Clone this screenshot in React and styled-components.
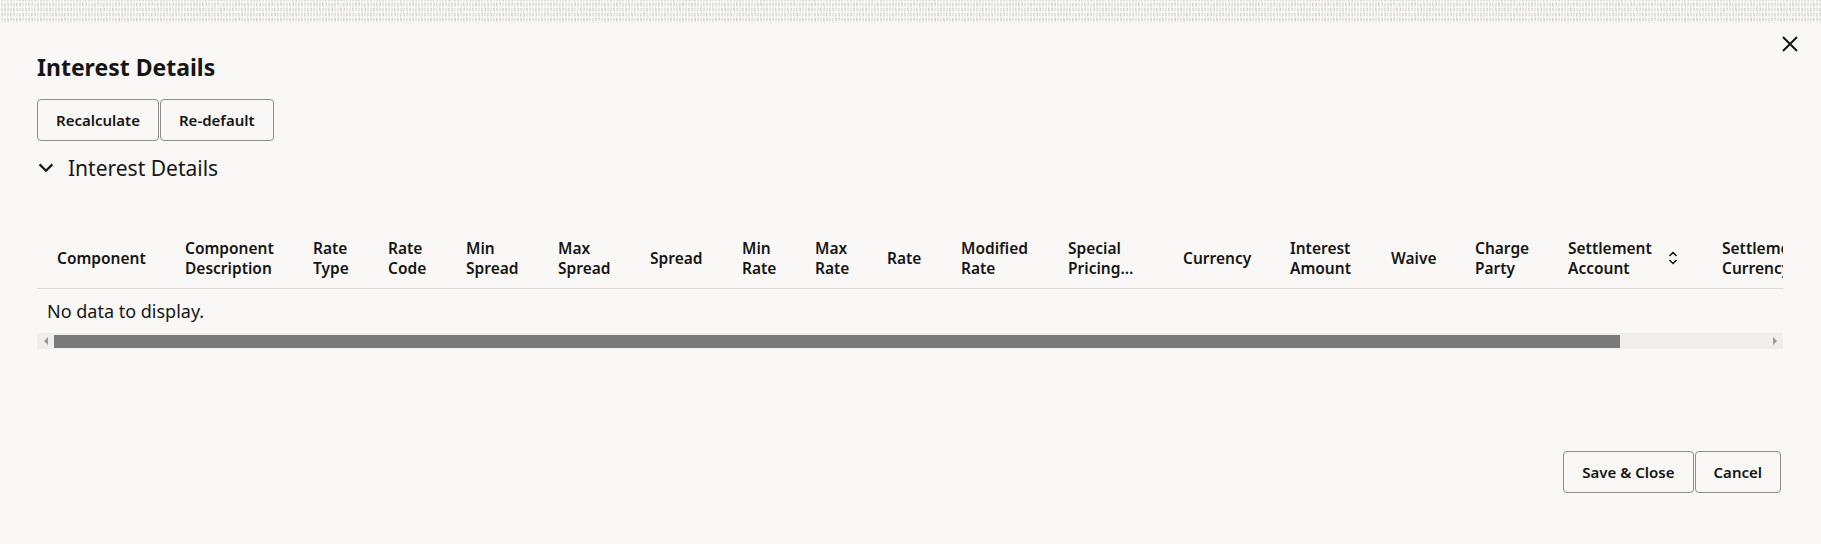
import React from 'react';
import styled, { createGlobalStyle } from 'styled-components';

const GlobalStyle = createGlobalStyle`
  html, body {
    margin: 0;
    padding: 0;
    background: #f9f8f6;
  }
  body {
    font-family: "Noto Sans", "Open Sans", sans-serif;
    color: #161513;
  }
`;

const columns = [
  { lines: ['Component'], width: 128 },
  { lines: ['Component', 'Description'], width: 128 },
  { lines: ['Rate', 'Type'], width: 75 },
  { lines: ['Rate', 'Code'], width: 78 },
  { lines: ['Min', 'Spread'], width: 92 },
  { lines: ['Max', 'Spread'], width: 92 },
  { lines: ['Spread'], width: 92 },
  { lines: ['Min', 'Rate'], width: 73 },
  { lines: ['Max', 'Rate'], width: 72 },
  { lines: ['Rate'], width: 74 },
  { lines: ['Modified', 'Rate'], width: 107 },
  { lines: ['Special', 'Pricing…'], width: 115 },
  { lines: ['Currency'], width: 107 },
  { lines: ['Interest', 'Amount'], width: 101 },
  { lines: ['Waive'], width: 84 },
  { lines: ['Charge', 'Party'], width: 93 },
  { lines: ['Settlement', 'Account'], width: 154, sortable: true },
  { lines: ['Settlement', 'Currency'], width: 140 },
  { lines: ['Charge', 'Amount'], width: 120 },
];

const tableWidth = columns.reduce((sum, c) => sum + c.width, 0);

const App = () => {
  return (
    <>
      <GlobalStyle />
      <Backdrop />
      <Dialog>
        <CloseButton aria-label="Close">
          <svg width="16" height="16" viewBox="0 0 16 16">
            <path d="M1 1 L15 15 M15 1 L1 15" stroke="#161513" strokeWidth="2" fill="none" />
          </svg>
        </CloseButton>

        <Title>Interest Details</Title>

        <Toolbar>
          <Button>Recalculate</Button>
          <Button>Re-default</Button>
        </Toolbar>

        <SectionToggle>
          <svg width="18" height="18" viewBox="0 0 18 18">
            <path d="M2.6 5.4 L9 11.8 L15.4 5.4" stroke="#161513" strokeWidth="2.2" fill="none" />
          </svg>
          <SectionTitle>Interest Details</SectionTitle>
        </SectionToggle>

        <TableFrame>
          <Table $width={tableWidth}>
            <colgroup>
              {columns.map((c, i) => (
                <Col key={i} $w={c.width} />
              ))}
            </colgroup>
            <thead>
              <tr>
                {columns.map((c, i) => (
                  <Th key={i}>
                    <HeadInner>
                      <span>
                        {c.lines.map((l, j) => (
                          <HeadLine key={j}>{l}</HeadLine>
                        ))}
                      </span>
                      {c.sortable && (
                        <SortIcon width="10" height="14" viewBox="0 0 10 14">
                          <path d="M1.5 5 L5 1.5 L8.5 5 M1.5 9 L5 12.5 L8.5 9" stroke="#161513" strokeWidth="1.5" fill="none" />
                        </SortIcon>
                      )}
                    </HeadInner>
                  </Th>
                ))}
              </tr>
            </thead>
            <tbody>
              <tr>
                <EmptyCell colSpan={columns.length}>No data to display.</EmptyCell>
              </tr>
            </tbody>
          </Table>
        </TableFrame>

        <Scrollbar>
          <ScrollArrow>
            <svg width="6" height="8" viewBox="0 0 6 8">
              <path d="M5 0 L1 4 L5 8 Z" fill="#9a9896" />
            </svg>
          </ScrollArrow>
          <ScrollTrack>
            <Thumb style={{ width: '91.5%' }} />
          </ScrollTrack>
          <ScrollArrow>
            <svg width="6" height="8" viewBox="0 0 6 8">
              <path d="M1 0 L5 4 L1 8 Z" fill="#9a9896" />
            </svg>
          </ScrollArrow>
        </Scrollbar>

        <Footer>
          <Button>Save &amp; Close</Button>
          <Button>Cancel</Button>
        </Footer>
      </Dialog>
    </>
  );
};

const Backdrop = styled.div`
  height: 23px;
  background-color: #e6e4e1;
  background-image:
    repeating-linear-gradient(90deg, rgba(255, 255, 255, 0.75) 0 1px, transparent 1px 3px),
    repeating-linear-gradient(0deg, rgba(255, 255, 255, 0.5) 0 2px, transparent 2px 5px),
    repeating-linear-gradient(75deg, rgba(205, 203, 200, 0.55) 0 1px, transparent 1px 4px);
`;

const Dialog = styled.div`
  position: relative;
  display: flex;
  flex-direction: column;
  padding: 30px 38px 0 37px;
  height: 521px;
  box-sizing: border-box;
  background: #f9f8f6;
`;

const CloseButton = styled.button`
  position: absolute;
  top: 13px;
  right: 23px;
  width: 16px;
  height: 16px;
  padding: 0;
  border: none;
  background: none;
  display: flex;
  cursor: pointer;
`;

const Title = styled.h1`
  margin: 0;
  font-size: 23px;
  line-height: 28px;
  font-weight: 700;
`;

const Toolbar = styled.div`
  display: flex;
  gap: 1px;
  margin-top: 18px;
`;

const Button = styled.button`
  height: 42px;
  padding: 0 18px;
  border: 1px solid #8f8d8a;
  border-radius: 4px;
  background: transparent;
  font-family: "Noto Sans", sans-serif;
  font-size: 15px;
  font-weight: 600;
  color: #161513;
  cursor: pointer;
`;

const SectionToggle = styled.div`
  display: flex;
  align-items: center;
  gap: 13px;
  margin-top: 15px;
  height: 24px;
`;

const SectionTitle = styled.span`
  font-size: 21px;
  line-height: 24px;
  font-weight: 400;
`;

const TableFrame = styled.div`
  margin-top: 48px;
  overflow: hidden;
`;

const Table = styled.table`
  width: ${(p) => p.$width}px;
  table-layout: fixed;
  border-collapse: collapse;
`;

const Col = styled.col`
  width: ${(p) => p.$w}px;
`;

const Th = styled.th`
  height: 60px;
  padding: 0 0 0 20px;
  text-align: left;
  vertical-align: middle;
  border-bottom: 1px solid #dfdcd8;
  font-size: 15.5px;
  line-height: 20px;
  font-weight: 600;
  white-space: nowrap;
  overflow: hidden;
`;

const HeadInner = styled.div`
  display: flex;
  align-items: center;
`;

const HeadLine = styled.span`
  display: block;
`;

const SortIcon = styled.svg`
  margin-left: 16px;
  flex: none;
`;

const EmptyCell = styled.td`
  height: 44px;
  padding: 0 0 0 10px;
  font-size: 18px;
  line-height: 24px;
  vertical-align: middle;
`;

const Scrollbar = styled.div`
  display: flex;
  height: 16px;
  background: #efeeec;
`;

const ScrollArrow = styled.div`
  width: 17px;
  flex: none;
  display: flex;
  align-items: center;
  justify-content: center;
`;

const ScrollTrack = styled.div`
  flex: 1;
  display: flex;
  align-items: center;
`;

const Thumb = styled.div`
  height: 13px;
  background: #7a7a7a;
`;

const Footer = styled.div`
  display: flex;
  justify-content: flex-end;
  gap: 1px;
  margin-top: 102px;
  padding-right: 2px;
`;

export default App;
